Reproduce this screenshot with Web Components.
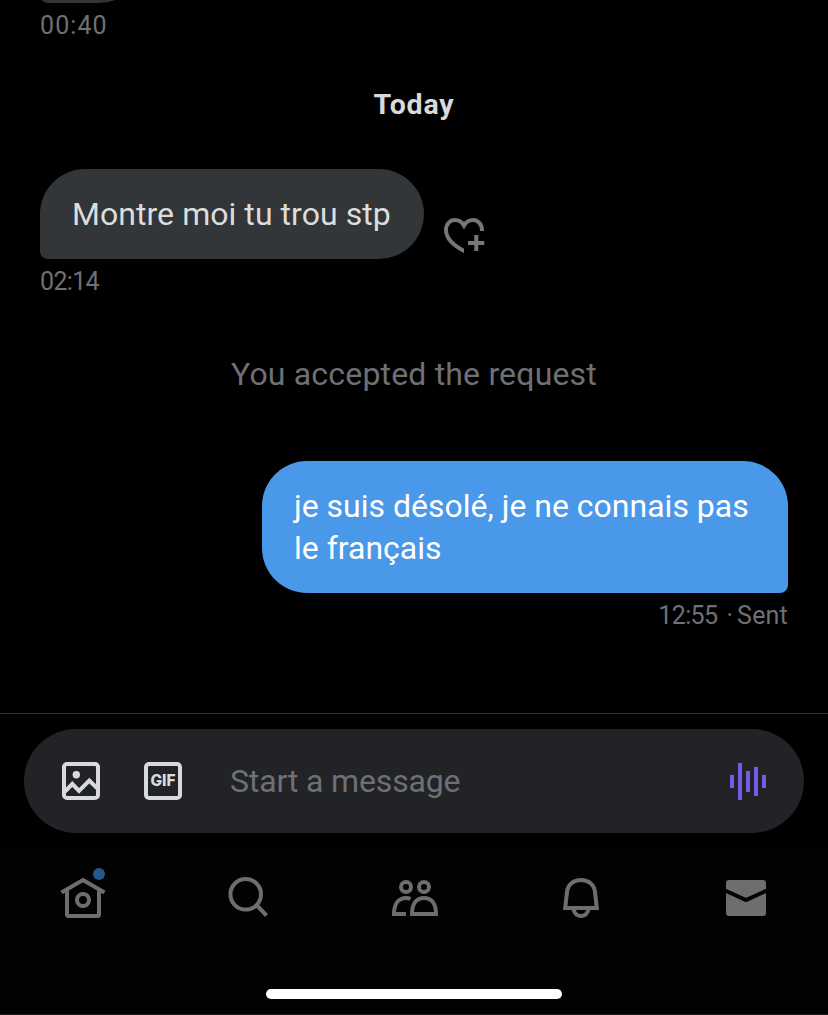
<!DOCTYPE html>
<html lang="en">
<head>
<meta charset="utf-8">
<title>Messages</title>
<style>
  body { margin: 0; background: #000; font-family: Roboto, "Liberation Sans", sans-serif; }
  .wide { letter-spacing: 1.1px; }
  .tight { letter-spacing: -0.65px; }
  .dot { margin: 0 4px 0 9px; }
</style>
</head>
<body>
<dm-screen>
  <dm-thread>
    <dm-message style="--width: 104px"><span slot="meta" class="wide">00:40</span></dm-message>
    <dm-day>Today</dm-day>
    <dm-message reactable style="--width: 384px"><span>Montre moi tu trou stp</span><span slot="meta" class="tight">02:14</span></dm-message>
    <dm-notice>You accepted the request</dm-notice>
    <dm-message sent style="--width: 526px; --track: 0"><span>je suis désolé, je ne connais pas<br>le français</span><span slot="meta"><span class="tight">12:55</span><span class="dot">·</span>Sent</span></dm-message>
  </dm-thread>
  <dm-composer>Start a message</dm-composer>
  <dm-tabbar></dm-tabbar>
</dm-screen>
<script>
const define = (name, html) => customElements.define(name, class extends HTMLElement {
  constructor() {
    super();
    this.attachShadow({ mode: 'open' }).innerHTML = html;
  }
});

define('dm-screen', `
<style>
  :host { display: flex; flex-direction: column; width: 828px; height: 1015px; overflow: hidden; background: #000; }
</style>
<slot></slot>`);

define('dm-thread', `
<style>
  :host { display: flex; flex-direction: column; justify-content: flex-end; box-sizing: border-box;
    height: 713px; flex: none; padding: 0 40px 82px; overflow: hidden; }
</style>
<slot></slot>`);

define('dm-day', `
<style>
  :host { display: block; margin: 48px 0; text-align: center; font-size: 28.5px; line-height: 32px;
    font-weight: 700; color: #d9d9d9; letter-spacing: 0.8px; }
</style>
<slot></slot>`);

define('dm-notice', `
<style>
  :host { display: block; margin: 56px 0 66px; text-align: center; font-size: 32px; line-height: 42px;
    color: #6e7074; letter-spacing: 0.18px; }
</style>
<slot></slot>`);

define('dm-heart', `
<style>
  :host { display: block; width: 41px; height: 36px; }
  svg { display: block; }
</style>
<svg width="41" height="36" viewBox="0 0 41 36" fill="none" stroke="#75777b" stroke-width="4">
  <clipPath id="cut"><path d="M0 0H41V15H20V36H0Z"/></clipPath>
  <path clip-path="url(#cut)" d="M38 13V12C38 6 33.5 2 29 2C25 2 22 4 20 7.5C18 4 15 2 11 2C6 2 2 6 2 12C2 20 9 27.500 22 34"/>
  <path d="M24 25H40.300M32.300 17V33"/>
</svg>`);

define('dm-message', `
<style>
  :host { display: flex; flex-direction: column; align-items: flex-start; flex: none; }
  .row { display: flex; align-items: flex-end; gap: 20px; }
  .bubble { box-sizing: border-box; width: var(--width, auto); min-height: 90px; padding: 24px 0 24px 32px;
    background: #333639; color: #dcdddd; border-radius: 45px 45px 45px 8px;
    font-size: 32px; line-height: 42px; white-space: nowrap; letter-spacing: var(--track, 0.05px); }
  .meta { margin-top: 7px; font-size: 25px; line-height: 32px; height: 31px; color: #6e7074; letter-spacing: 0.2px; }
  dm-heart { display: none; margin-bottom: 5px; }
  :host([reactable]) dm-heart { display: block; }
  :host([sent]) { align-items: flex-end; }
  :host([sent]) .bubble { background: #4a98e9; color: #fff; border-radius: 45px 45px 8px 45px; }
</style>
<div class="row"><div class="bubble"><slot></slot></div><dm-heart></dm-heart></div>
<div class="meta"><slot name="meta"></slot></div>`);

define('dm-composer', `
<style>
  :host { display: block; flex: none; height: 136px; box-sizing: border-box; border-top: 1px solid #333537; padding: 15px 24px 0; }
  .pill { display: flex; align-items: center; height: 104px; box-sizing: border-box; border-radius: 52px;
    background: #212327; padding: 0 38px; }
  svg { display: block; flex: none; }
  .gif { box-sizing: border-box; width: 38px; height: 38px; margin: 0 48px 0 44px; border: 4px solid #d9dadc; border-radius: 5px;
    display: flex; align-items: center; justify-content: center; font: 800 15.5px/30px Inter, sans-serif; color: #d9dadc; }
  .field { flex: 1; font-size: 32px; line-height: 42px; color: #6e7074; letter-spacing: -0.15px; }
</style>
<div class="pill">
  <svg width="38" height="38" viewBox="0 0 38 38" fill="none" stroke="#d9dadc" stroke-width="4">
    <rect x="2" y="2" width="34" height="34" rx="3"/>
    <path d="M3 29.500L10.300 22L17 29L27.300 18.500L36 27"/>
    <circle cx="14.300" cy="12.700" r="3.700" fill="#d9dadc" stroke="none"/>
  </svg>
  <div class="gif">GIF</div>
  <div class="field"><slot></slot></div>
  <svg width="37" height="38" viewBox="0 0 37 38" stroke="#755bea" stroke-width="4">
    <path d="M3 13V26M11 1V38M19 9V30M27 5V34M35 13V26"/>
  </svg>
</div>`);

define('dm-tabbar', `
<style>
  :host { display: flex; flex-direction: column; align-items: center; justify-content: space-between; flex: 1;
    box-sizing: border-box; background: #020202; border-bottom: 1px solid #1c1c1c; padding: 17px 0 15px; }
  nav { display: grid; grid-template-columns: 166px 166px 166px 166px 164px; justify-items: center; width: 828px; }
  svg { display: block; }
  .bar { width: 296px; height: 10px; border-radius: 5px; background: #fff; }
</style>
<nav>
  <svg width="48" height="56" viewBox="59 866 48 56" fill="none" stroke="#6e6e6e" stroke-width="4">
    <path d="M61.500 892.500L83 880L104.500 892.500M67 890V914.500Q67 916 68.500 916H97.500Q99 916 99 914.500V890"/>
    <circle cx="83" cy="900" r="6"/>
    <circle cx="99" cy="874" r="6" fill="#25578a" stroke="none"/>
  </svg>
  <svg width="48" height="56" viewBox="225 866 48 56" fill="none" stroke="#6e6e6e" stroke-width="4">
    <circle cx="245.700" cy="894.300" r="15.300"/><path d="M256.500 905L266.500 915.500"/>
  </svg>
  <svg width="48" height="56" viewBox="391 866 48 56" fill="none" stroke="#6e6e6e" stroke-width="4">
    <circle cx="406" cy="887" r="5"/><circle cx="424" cy="887" r="5"/>
    <path d="M412 914C412 903.500 416.500 898 424 898S436 903.500 436 914Z"/>
    <path d="M406 914H394C394 903.500 399 898 406 898Q408.500 898 410.500 899"/>
  </svg>
  <svg width="48" height="56" viewBox="557 866 48 56" fill="none" stroke="#6e6e6e" stroke-width="4">
    <path d="M565.200 908L567 892C567.700 884.500 573.500 880 581 880S594.300 884.500 595 892L596.800 908Z"/>
    <path d="M573.300 909C574.500 913.500 577 916 581 916S587.500 913.500 588.700 909"/>
  </svg>
  <svg width="48" height="56" viewBox="722 866 48 56" fill="none">
    <rect x="726" y="880" width="40" height="36" rx="3" fill="#6e6e6e"/>
    <path d="M725 890.500L746 900L767 890.500" stroke="#020202" stroke-width="4"/>
  </svg>
</nav>
<div class="bar"></div>`);
</script>
</body>
</html>
